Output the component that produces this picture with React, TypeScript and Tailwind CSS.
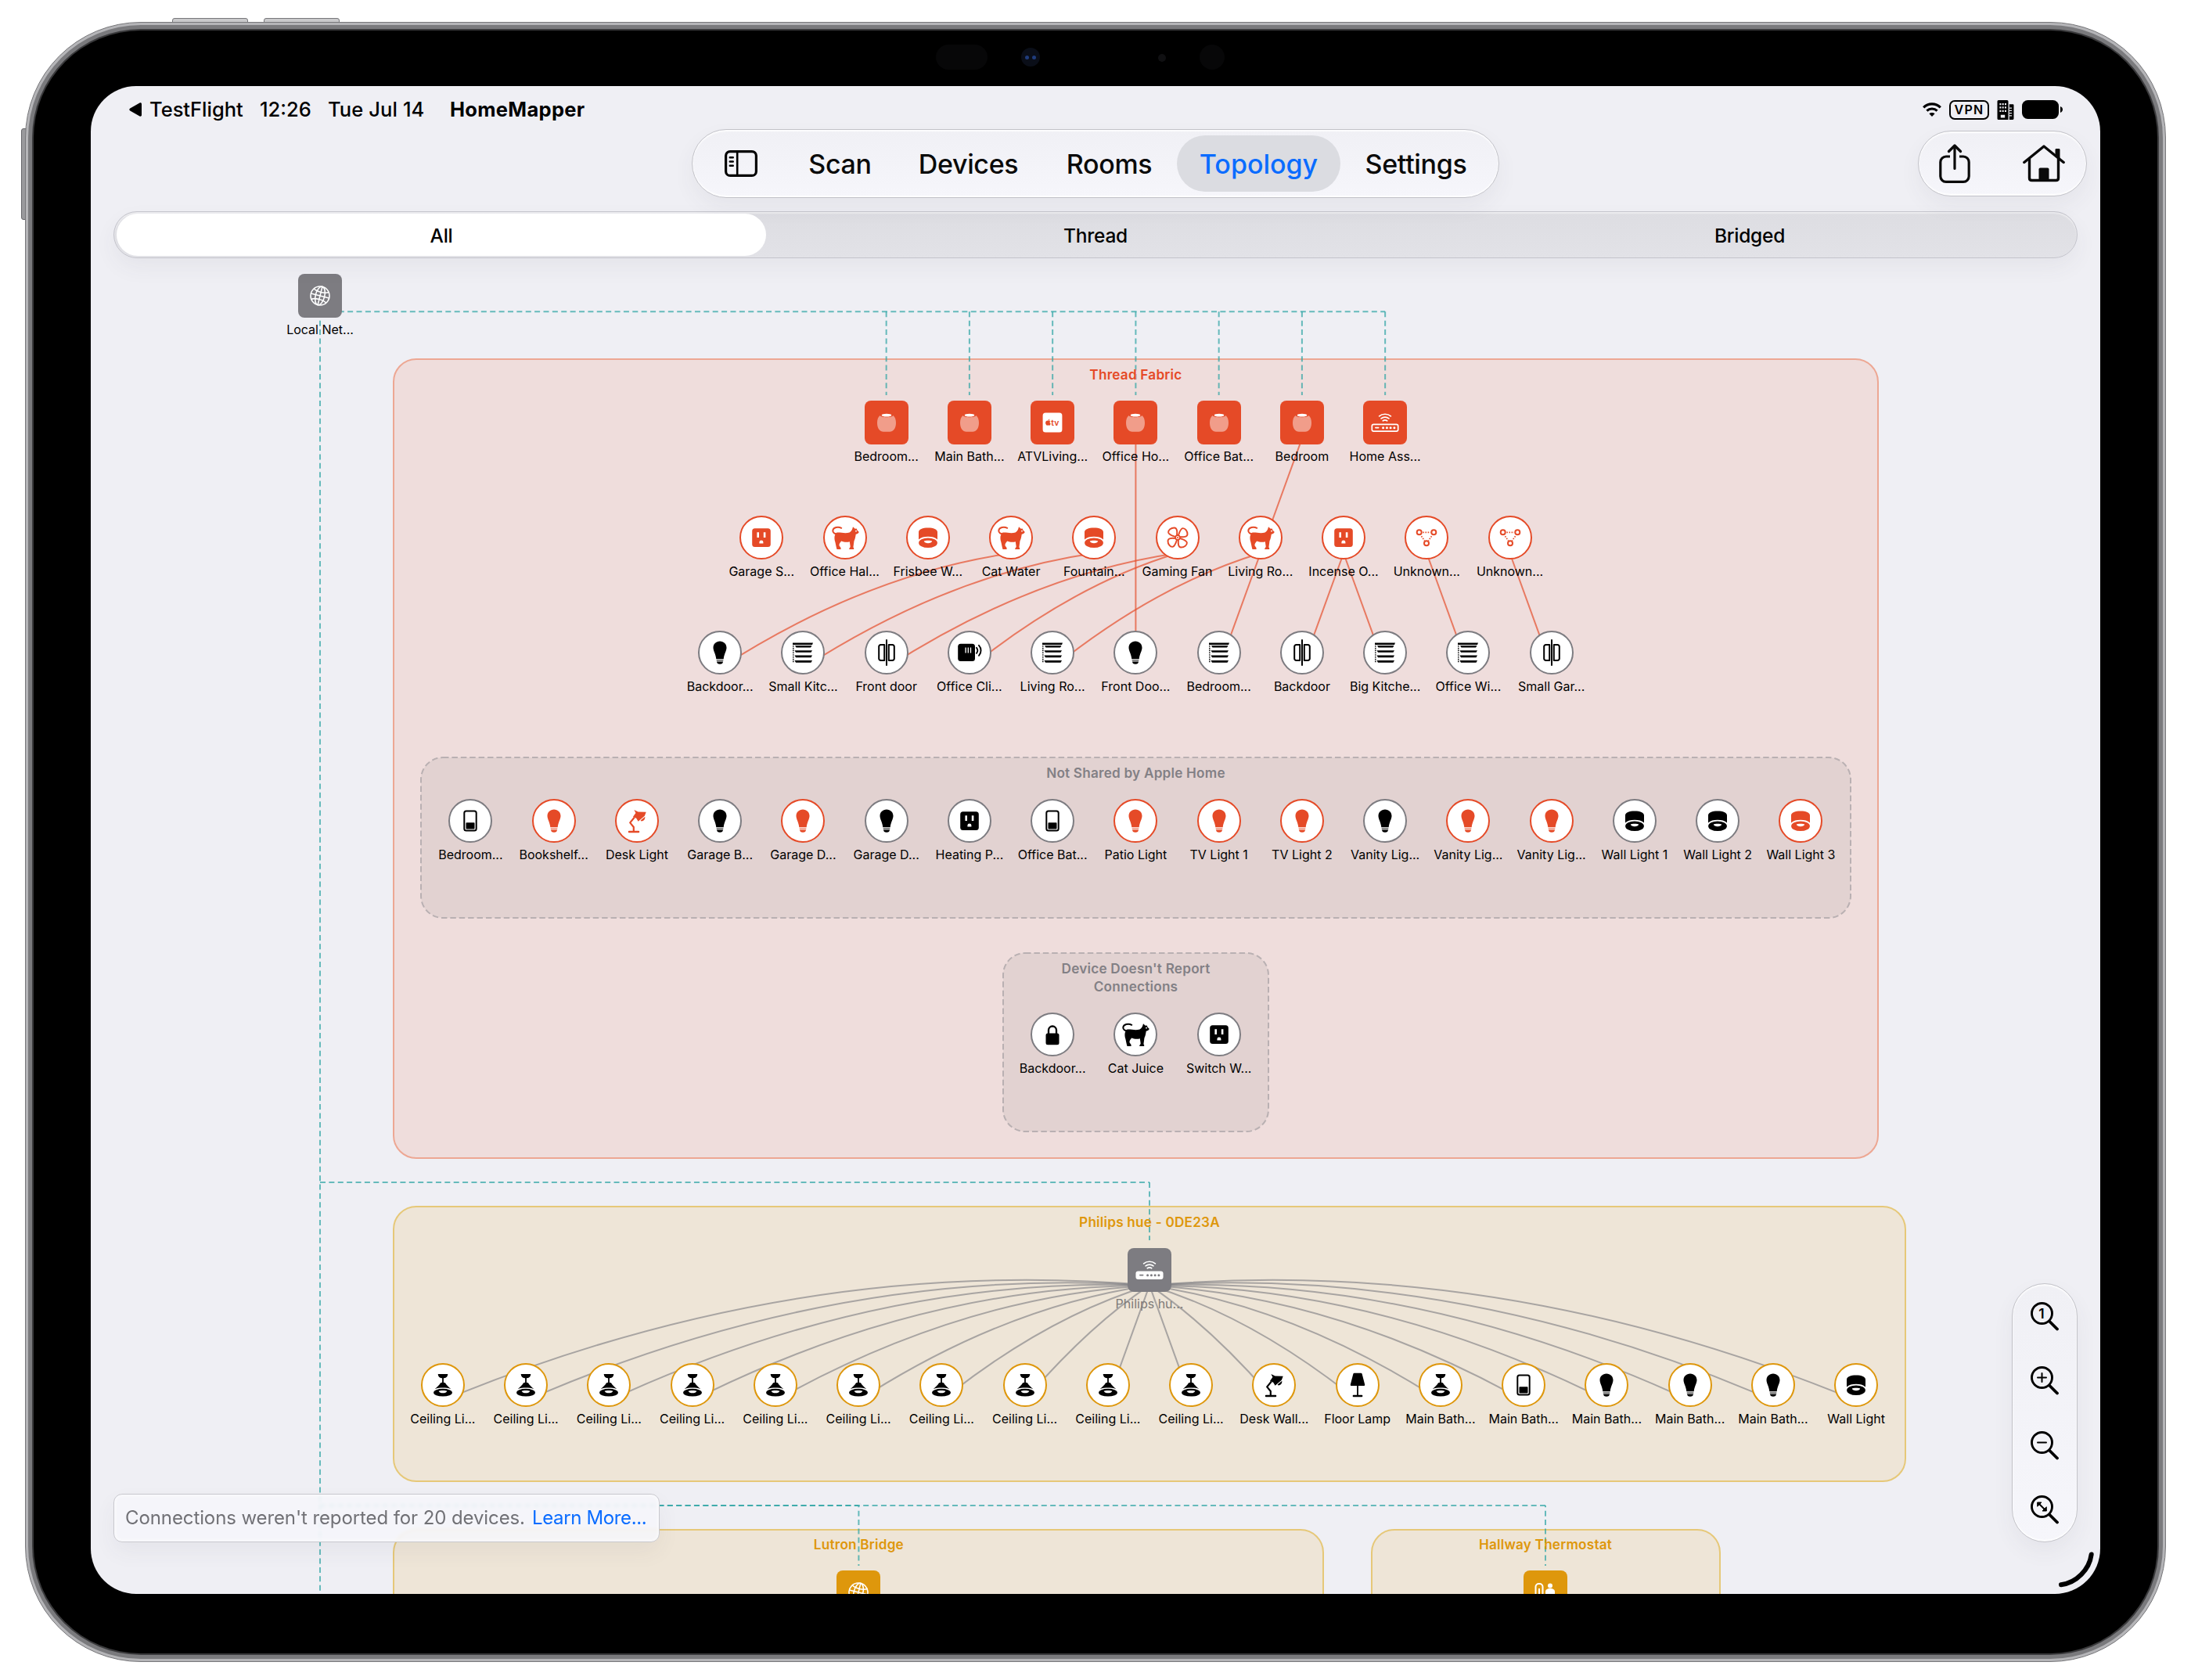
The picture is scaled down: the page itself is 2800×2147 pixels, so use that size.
import React from 'react';
import clsx from 'clsx';

type Tone = 'red' | 'gray' | 'amber' | 'redSolid' | 'graySolid' | 'amberSolid';

interface TopologyNode {
  x: number;
  y: number;
  icon: string;
  label: string;
  tone: Tone;
  muted?: boolean;
}

const PITCH = 106.25;
const CENTER = 1335.4;
const HUE_CENTER = 1353;

const row = (
  center: number,
  y: number,
  items: [icon: string, label: string, tone: Tone][]
): TopologyNode[] =>
  items.map(([icon, label, tone], i) => ({
    x: center + (i - (items.length - 1) / 2) * PITCH,
    y,
    icon,
    label,
    tone,
  }));

const BORDER_ROUTERS = row(CENTER, 430.3, [
  ['homepod', 'Bedroom...', 'redSolid'],
  ['homepod', 'Main Bath...', 'redSolid'],
  ['appletv', 'ATVLiving...', 'redSolid'],
  ['homepod', 'Office Ho...', 'redSolid'],
  ['homepod', 'Office Bat...', 'redSolid'],
  ['homepod', 'Bedroom', 'redSolid'],
  ['router', 'Home Ass...', 'redSolid'],
]);

const ROUTERS = row(CENTER, 577, [
  ['outlet', 'Garage S...', 'red'],
  ['cat', 'Office Hal...', 'red'],
  ['dome', 'Frisbee W...', 'red'],
  ['cat', 'Cat Water', 'red'],
  ['dome', 'Fountain...', 'red'],
  ['fan', 'Gaming Fan', 'red'],
  ['cat', 'Living Ro...', 'red'],
  ['outlet', 'Incense O...', 'red'],
  ['mesh', 'Unknown...', 'red'],
  ['mesh', 'Unknown...', 'red'],
]);

const END_DEVICES = row(CENTER, 723.7, [
  ['bulb', 'Backdoor...', 'gray'],
  ['blinds', 'Small Kitc...', 'gray'],
  ['contact', 'Front door', 'gray'],
  ['climate', 'Office Cli...', 'gray'],
  ['blinds', 'Living Ro...', 'gray'],
  ['bulb', 'Front Doo...', 'gray'],
  ['blinds', 'Bedroom...', 'gray'],
  ['contact', 'Backdoor', 'gray'],
  ['blinds', 'Big Kitche...', 'gray'],
  ['blinds', 'Office Wi...', 'gray'],
  ['contact', 'Small Gar...', 'gray'],
]);

const NOT_SHARED = row(CENTER, 938.7, [
  ['switch', 'Bedroom...', 'gray'],
  ['bulb', 'Bookshelf...', 'red'],
  ['desk', 'Desk Light', 'red'],
  ['bulb', 'Garage B...', 'gray'],
  ['bulb', 'Garage D...', 'red'],
  ['bulb', 'Garage D...', 'gray'],
  ['outlet', 'Heating P...', 'gray'],
  ['switch', 'Office Bat...', 'gray'],
  ['bulb', 'Patio Light', 'red'],
  ['bulb', 'TV Light 1', 'red'],
  ['bulb', 'TV Light 2', 'red'],
  ['bulb', 'Vanity Lig...', 'gray'],
  ['bulb', 'Vanity Lig...', 'red'],
  ['bulb', 'Vanity Lig...', 'red'],
  ['dome', 'Wall Light 1', 'gray'],
  ['dome', 'Wall Light 2', 'gray'],
  ['dome', 'Wall Light 3', 'red'],
]);

const NO_REPORT = row(CENTER, 1211.7, [
  ['lock', 'Backdoor...', 'gray'],
  ['cat', 'Cat Juice', 'gray'],
  ['outlet', 'Switch W...', 'gray'],
]);

const HUE_DEVICES = row(HUE_CENTER, 1659.7, [
  ['pendant', 'Ceiling Li...', 'amber'],
  ['pendant', 'Ceiling Li...', 'amber'],
  ['pendant', 'Ceiling Li...', 'amber'],
  ['pendant', 'Ceiling Li...', 'amber'],
  ['pendant', 'Ceiling Li...', 'amber'],
  ['pendant', 'Ceiling Li...', 'amber'],
  ['pendant', 'Ceiling Li...', 'amber'],
  ['pendant', 'Ceiling Li...', 'amber'],
  ['pendant', 'Ceiling Li...', 'amber'],
  ['pendant', 'Ceiling Li...', 'amber'],
  ['desk', 'Desk Wall...', 'amber'],
  ['floor', 'Floor Lamp', 'amber'],
  ['pendant', 'Main Bath...', 'amber'],
  ['switch', 'Main Bath...', 'amber'],
  ['bulb', 'Main Bath...', 'amber'],
  ['bulb', 'Main Bath...', 'amber'],
  ['bulb', 'Main Bath...', 'amber'],
  ['dome', 'Wall Light', 'amber'],
]);

const LOCAL: TopologyNode = { x: 293, y: 268, icon: 'globe', label: 'Local Net...', tone: 'graySolid' };
const HUE_BRIDGE: TopologyNode = { x: HUE_CENTER, y: 1512.7, icon: 'routerFill', label: 'Philips hu...', tone: 'graySolid', muted: true };
const LUTRON: TopologyNode = { x: 981.4, y: 1925, icon: 'globe', label: '', tone: 'amberSolid' };
const THERMOSTAT: TopologyNode = { x: 1859, y: 1925, icon: 'thermostat', label: '', tone: 'amberSolid' };

const NODES = [
  LOCAL,
  ...BORDER_ROUTERS,
  ...ROUTERS,
  ...END_DEVICES,
  ...NOT_SHARED,
  ...NO_REPORT,
  HUE_BRIDGE,
  ...HUE_DEVICES,
  LUTRON,
  THERMOSTAT,
];

const THREAD_LINKS: [TopologyNode, TopologyNode][] = [
  [ROUTERS[3], END_DEVICES[0]],
  [ROUTERS[4], END_DEVICES[1]],
  [ROUTERS[5], END_DEVICES[2]],
  [ROUTERS[5], END_DEVICES[3]],
  [ROUTERS[6], END_DEVICES[4]],
  [BORDER_ROUTERS[3], END_DEVICES[5]],
  [BORDER_ROUTERS[5], ROUTERS[6]],
  [ROUTERS[6], END_DEVICES[6]],
  [ROUTERS[7], END_DEVICES[7]],
  [ROUTERS[7], END_DEVICES[8]],
  [ROUTERS[8], END_DEVICES[9]],
  [ROUTERS[9], END_DEVICES[10]],
];

// Links join the middle of each icon + label stack, wider spans bow upwards
const linkPath = (a: TopologyNode, b: TopologyNode) => {
  const ay = a.y + 20;
  const by = b.y + 20;
  const dx = Math.abs(a.x - b.x);
  if (dx < 60) return `M${a.x},${ay} L${b.x},${by}`;
  return `M${a.x},${ay} Q${(a.x + b.x) / 2},${(ay + by) / 2 - dx * 0.125} ${b.x},${by}`;
};

const Glyph: React.FC<{ name: string }> = ({ name }) => {
  switch (name) {
    case 'bulb':
      return (
        <g fill="currentColor">
          <path d="M0-14.5c5 0 8.5 3.6 8.5 8.3C8.5-2 5.4 1.500 4.700 8.200h-9.400C-5.400 1.500-8.500-2-8.500-6.200c0-4.700 3.500-8.300 8.500-8.300z" />
          <path d="M-4.300 9.200h8.600v1.700h-8.600z" opacity=".55" />
          <path d="M-4 11.400h8c0 2-1.500 3.300-4 3.300s-4-1.300-4-3.300z" />
        </g>
      );
    case 'outlet':
      return (
        <g>
          <rect x="-11.800" y="-11.700" width="23.600" height="23.600" rx="3.500" fill="currentColor" />
          <path d="M-5.600-6.800h2.600V0h-2.600zM2.800-6.800h2.600V0H2.800zM-2.600 7.600V5.800a2.500 2.300 0 0 1 5 0v1.800z" fill="#fff" />
        </g>
      );
    case 'cat':
      return (
        <g>
          <path
            d="M-11-6.200C-7-7.200 0-4.600 5.600-6.600 8-8 9.200-10 10-13.800l2.800 2.600 1.800-.2 1.200 2.400 1.900 1.800c-.2 2-2.400 2.600-4 3C13.300-.5 12.700 2 11.500 4.200L10.400 12.500c1 .6 1 1.700.7 2.500H5.200c-.2-1.600 1.300-2 1.500-3.500L5.800 5.300C2 6.400-2 5.700-4.800 4.400-7 7-7.900 8.300-7.400 10.500l1.700 2.300c.4.700.4 1.500.2 2.200h-5c-.8-2.300-1.300-6-2.200-9.500C-14 1.500-14-3.500-11-6.200z"
            fill="currentColor"
          />
          <path d="M-4.800-12.200c-4-2.200-10.500-1-10.900 3.200-.2 3 2.700 4.600 6 4" fill="none" stroke="currentColor" strokeWidth="2" strokeLinecap="round" />
          <circle cx="14" cy="-8.300" r=".9" fill="#fff" />
        </g>
      );
    case 'dome':
      return (
        <g>
          <path d="M-12 2.500V-7c0-3.500 5-5.500 12-5.500S12-10.500 12-7v9.500C9-.3 5-1.200 0-1.200S-9-.3-12 2.500z" fill="currentColor" />
          <ellipse cx="0" cy="6.800" rx="11.900" ry="6.300" fill="currentColor" />
          <path d="M-5.200 4.600c1.400-1 9-1 10.400 0C4.500 8.200-4.500 8.200-5.200 4.600z" fill="#fff" />
        </g>
      );
    case 'pendant':
      return (
        <g fill="currentColor">
          <path d="M-6.300-14H6.300c0 3-2 5-4.800 5.300h-3C-4.300-9-6.300-11-6.300-14z" />
          <path d="M-.9-9.500H.9v6.200l2 .6C4.600.5 8 3 10.300 5.200 7 3.700 3.500 3.600 0 3.600s-7 .1-10.300 1.600C-8 3-4.600.5-2.900-2.700l2-.6z" />
          <ellipse cx="0" cy="9.700" rx="11.900" ry="4.900" />
          <path d="M-5.300 7.800c1.500-1 9.100-1 10.600 0C4.500 11.200-4.500 11.200-5.300 7.800z" fill="#fff" />
        </g>
      );
    case 'fan':
      return (
        <g fill="none" stroke="currentColor" strokeWidth="1.900" strokeLinejoin="round">
          {[0, 90, 180, 270].map((a) => (
            <path key={a} transform={`rotate(${a})`} d="M-1-3.200C-.3-7.500-.8-12.400-4.200-12.500-8.500-12.600-12-9.600-11.900-6.600-11.600-3.600-7-2.400-3.200-1" />
          ))}
          <circle r="3" />
          <circle r="1" fill="currentColor" stroke="none" />
        </g>
      );
    case 'mesh':
      return (
        <g fill="none" stroke="currentColor" strokeWidth="2">
          <circle cx="-9.300" cy="-6.700" r="3" />
          <circle cx="9.300" cy="-6.700" r="3" />
          <circle cx="0" cy="7.200" r="3" />
          <path d="M-4.600-6.700h9.600M-6.500-1.800l4 5.600M6.500-1.800l-4 5.600" strokeDasharray="1.500 1.600" strokeWidth="1.700" />
        </g>
      );
    case 'blinds':
      return (
        <g fill="currentColor">
          <path d="M-13-12.500h26l-1 2.600h-25zM-10-9h21.500l-1.500 2.500H-8.500zM-10.500-2.800H12L10.500-.2H-9zM-10.500 3.600H12l-1.500 2.600H-9zM-10.500 10H12l-1.500 2.700H-9z" />
          <path d="M-12.200-9v21.700" fill="none" stroke="currentColor" strokeWidth="1.400" strokeDasharray="1.600 1.200" />
        </g>
      );
    case 'contact':
      return (
        <g fill="none" stroke="currentColor" strokeWidth="2.200">
          <path d="M0-16V16" strokeWidth="2" strokeLinecap="round" />
          <path d="M-2.800-10h-4.700a2.300 2.300 0 0 0-2.300 2.300V7.700A2.300 2.300 0 0 0-7.500 10h4.700zM2.800-10h4.700a2.300 2.300 0 0 1 2.300 2.300V7.700A2.300 2.300 0 0 1 7.500 10H2.800z" strokeWidth="2" strokeLinejoin="round" />
        </g>
      );
    case 'climate':
      return (
        <g>
          <rect x="-14.800" y="-11.300" width="21.800" height="22.300" rx="3.500" fill="currentColor" />
          <path d="M-4.900-6.500v7M-1.700-6.500v7M1.500-6.500v7" stroke="#fff" strokeWidth="1.300" />
          <path d="M9-6.200c1.600 2 1.600 5 0 7M12-9.200c3.400 3.600 3.400 9.400 0 13" fill="none" stroke="currentColor" strokeWidth="1.900" strokeLinecap="round" />
        </g>
      );
    case 'switch':
      return (
        <g>
          <rect x="-7.700" y="-12.600" width="15.400" height="25.200" rx="2.500" fill="none" stroke="currentColor" strokeWidth="2" />
          <rect x="-5.500" y="2.300" width="11" height="8.200" rx=".8" fill="currentColor" />
        </g>
      );
    case 'desk':
      return (
        <g fill="currentColor">
          <path d="M-3.600-14 1.500-11.400 11.700-11.200 9.800-6.200 1.600.8-.8-3.200-5-5.200-1.600-10z" />
          <path d="M10.300-5.200C10.600-2.200 9 .2 5.600.6L4.600-.6z" />
          <path d="M-3.200-4.500-8.800 2.400-4.200 8v5.500" fill="none" stroke="currentColor" strokeWidth="2.200" strokeLinejoin="round" />
          <rect x="-11.200" y="12.700" width="14.400" height="2.500" rx="1" />
        </g>
      );
    case 'floor':
      return (
        <g fill="currentColor">
          <path d="M-4.200-15.300h8.400c.8 0 1.300.4 1.500 1.200L9.200-.6c.2.900-.3 1.500-1.200 1.500H-8c-.9 0-1.400-.6-1.200-1.500l3.500-13.500c.2-.8.7-1.200 1.500-1.200z" />
          <path d="M-.9.900H.9V13H-.9z" />
          <rect x="-6.300" y="12.700" width="12.600" height="2.500" rx="1" />
        </g>
      );
    case 'lock':
      return (
        <g>
          <rect x="-8.500" y="-1.500" width="17" height="14.800" rx="2.500" fill="currentColor" />
          <path d="M-5-1V-5.500a5 5 0 0 1 10 0V-1" fill="none" stroke="currentColor" strokeWidth="2.300" />
        </g>
      );
    case 'homepod':
      return (
        <g>
          <path d="M-8.500-9C-6.500-6 6.500-6 8.500-9 10.800-7 12-4 12 .5c0 7-3.500 11.300-8 11.300h-8C-8.500 11.800-12 7.500-12 .5c0-4.500 1.200-7.500 3.500-9.500z" fill="#fff" opacity=".46" />
          <ellipse cx="0" cy="-9.300" rx="6.300" ry="1.900" fill="#fff" />
        </g>
      );
    case 'appletv':
      return (
        <g>
          <rect x="-12.400" y="-12.400" width="24.800" height="24.800" rx="3.500" fill="#fff" />
          <path d="M-5.300-2.200c.9-.6 2-.5 2.700.3-1.200.9-1 2.700.3 3.300-.5 1.600-1.500 2.700-2.600 2.200-.4-.2-.8-.2-1.200 0C-7.500 4.200-9 2-8.900.2c.1-2 1.900-3.200 3.600-2.400zM-5.400-2.600c0-1 .8-1.900 1.700-2 .1 1-.7 2-1.700 2z" fill="#e54a27" />
          <text x="-1.800" y="4" fontSize="10.500" fontWeight="600" fontFamily="Inter, sans-serif" fill="#e54a27">tv</text>
        </g>
      );
    case 'router':
    case 'routerFill': {
      const filled = name === 'routerFill';
      return (
        <g>
          <rect x="-16.700" y="2.300" width="33.400" height="8.800" rx="2.200" fill={filled ? '#fff' : 'none'} stroke="#fff" strokeWidth="1.700" />
          <g fill={filled ? '#7d7c81' : '#fff'}>
            <rect x="-13" y="5.700" width="5.500" height="1.700" rx=".8" />
            <circle cx="-2.400" cy="6.700" r="1.500" />
            <circle cx="2.400" cy="6.700" r="1.500" />
            <circle cx="7.100" cy="6.700" r="1.500" />
            <circle cx="11.900" cy="6.700" r="1.500" />
          </g>
          <path d="M-7.400-8.200c4-3.400 10.800-3.400 14.800 0M-5-5.200c2.800-2.300 7.200-2.300 10 0M-2.700-2.200c1.600-1.200 3.800-1.200 5.400 0" fill="none" stroke="#fff" strokeWidth="1.700" strokeLinecap="round" />
        </g>
      );
    }
    case 'globe':
      return (
        <g fill="none" stroke="#fff" strokeWidth="1.600">
          <circle r="12" />
          <g transform="rotate(14)">
            <ellipse rx="5.800" ry="12" />
            <path d="M0-12V12M-12 0H12M-9.800-7c4.500 3.200 15 3.200 19.600 0M-9.800 7c4.500-3.200 15-3.200 19.600 0" />
          </g>
        </g>
      );
    case 'thermostat':
      return (
        <g>
          <rect x="-12.500" y="-11" width="9" height="24" rx="4" fill="none" stroke="#fff" strokeWidth="2" />
          <path d="M-8-5V8" stroke="#fff" strokeWidth="2" />
          <circle cx="6" cy="-8.500" r="3" fill="#fff" />
          <path d="M0 8V-1c0-2 2-4 6-4s6 2 6 4v9z" fill="#fff" />
        </g>
      );
    default:
      return null;
  }
};

const TONES: Record<Tone, string> = {
  red: 'rounded-full border-2 border-[#e54a27] bg-white text-[#e54a27]',
  gray: 'rounded-full border-2 border-[#7d7c81] bg-white text-black',
  amber: 'rounded-full border-2 border-[#de970c] bg-white text-black',
  redSolid: 'rounded-[8px] bg-[#e54a27] text-white',
  graySolid: 'rounded-[8px] bg-[#7d7c81] text-white',
  amberSolid: 'rounded-[8px] bg-[#de970c] text-white',
};

const NodeView: React.FC<{ node: TopologyNode }> = ({ node }) => (
  <div
    className="absolute -mt-7 flex w-[110px] -translate-x-1/2 flex-col items-center gap-[5px]"
    style={{ left: node.x, top: node.y }}
  >
    <div className={clsx('flex size-14 shrink-0 items-center justify-center', TONES[node.tone])}>
      <svg viewBox="-20 -20 40 40" className="size-10 shrink-0">
        <Glyph name={node.icon} />
      </svg>
    </div>
    <span className={clsx('text-[16px] leading-5 whitespace-nowrap', node.muted ? 'text-[#7f7b79]' : 'text-black')}>
      {node.label}
    </span>
  </div>
);

const Links: React.FC = () => (
  <svg viewBox="0 0 2568 1927" className="absolute inset-0 h-[1927px] w-[2568px]" fill="none">
    {/* Local network */}
    <g stroke="#2fa5a5" strokeOpacity=".72" strokeWidth="2" strokeDasharray="7 4.38">
      <path d="M293,288.300V1927" />
      <path d={`M294,288.300H${BORDER_ROUTERS[6].x}`} />
      {BORDER_ROUTERS.map((n) => (
        <path key={n.x} d={`M${n.x},288.300V395`} />
      ))}
      <path d={`M293,1401H${HUE_CENTER}`} />
      <path d={`M${HUE_CENTER},1401V1475`} />
      <path d="M293,1814H1859" />
      <path d="M293,1814H981.400" />
      <path d="M981.400,1814V1891M1859,1814V1891" strokeDashoffset="4.700" />
    </g>
    <g stroke="#e54a27" strokeOpacity=".68" strokeWidth="2">
      {THREAD_LINKS.map(([a, b], i) => (
        <path key={i} d={linkPath(a, b)} />
      ))}
    </g>
    <g stroke="#7d7c81" strokeOpacity=".62" strokeWidth="2">
      {HUE_DEVICES.map((n) => (
        <path key={n.x} d={linkPath(HUE_BRIDGE, n)} />
      ))}
    </g>
  </svg>
);

const GroupTitle: React.FC<{ x: number; y: number; className: string; children: React.ReactNode }> = ({
  x,
  y,
  className,
  children,
}) => (
  <span
    className={clsx('absolute -translate-1/2 text-[17.200px] leading-5 font-semibold tracking-[0.200px] whitespace-nowrap', className)}
    style={{ left: x, top: y }}
  >
    {children}
  </span>
);

const DashedGroup: React.FC<{ title: string; className: string }> = ({ title, className }) => (
  <div className={clsx('absolute flex justify-center rounded-[28px] bg-[#e2d2d1] px-[60px] pt-[8px]', className)}>
    <svg className="absolute inset-0 size-full overflow-visible">
      <rect width="100%" height="100%" rx="28" fill="none" stroke="#b9b0b2" strokeWidth="2" strokeDasharray="7.500 3.900" />
    </svg>
    <span className="text-center text-[17.200px] leading-[23.400px] font-semibold tracking-[0.200px] text-[#828085]">{title}</span>
  </div>
);

const Canvas: React.FC = () => (
  <div className="absolute inset-0 overflow-hidden">
    <div className="absolute top-[348px] left-[386px] h-[1023px] w-[1899px] rounded-[30px] border-2 border-[#eda793] bg-[#efdddc]" />
    <div className="absolute top-[1431px] left-[386px] h-[353px] w-[1934px] rounded-[30px] border-2 border-[#e6c878] bg-[#eee5d7]" />
    <div className="absolute top-[1844px] left-[386px] h-[353px] w-[1190px] rounded-[30px] border-2 border-[#e6c878] bg-[#eee5d7]" />
    <div className="absolute top-[1844px] left-[1636px] h-[353px] w-[447px] rounded-[30px] border-2 border-[#e6c878] bg-[#eee5d7]" />
    <DashedGroup title="Not Shared by Apple Home" className="top-[858px] left-[422px] h-[205px] w-[1827px]" />
    <DashedGroup title="Device Doesn't Report Connections" className="top-[1108px] left-[1166px] h-[228px] w-[339px]" />
    <Links />
    <GroupTitle x={CENTER} y={368.500} className="text-[#e54a27]">Thread Fabric</GroupTitle>
    <GroupTitle x={HUE_CENTER} y={1451.500} className="text-[#de970c]">Philips hue - 0DE23A</GroupTitle>
    <GroupTitle x={981.400} y={1863.500} className="text-[#de970c]">Lutron Bridge</GroupTitle>
    <GroupTitle x={1859} y={1863.500} className="text-[#de970c]">Hallway Thermostat</GroupTitle>
    {NODES.map((n, i) => (
      <NodeView key={i} node={n} />
    ))}
  </div>
);

const StatusBar: React.FC = () => (
  <div className="flex h-[55px] items-center pt-[5px] pr-[48px] pl-[49px] text-[25.500px] leading-none font-medium text-black">
    <svg viewBox="0 0 16 18" className="h-[18px] w-4">
      <path d="M1.200 7.600 13.500.6c1.200-.6 2.500 0 2.500 1.300v14.200c0 1.300-1.300 1.900-2.500 1.300L1.200 10.400c-1.200-.7-1.200-2.100 0-2.800z" />
    </svg>
    <span className="ml-[10px] w-[141px]">TestFlight</span>
    <span className="w-[87px]">12:26</span>
    <span className="w-[156px] tracking-[0.100px]">Tue Jul 14</span>
    <span className="font-bold tracking-[0.300px]">HomeMapper</span>
    <div className="ml-auto flex items-center gap-[10px]">
      <svg viewBox="0 0 24 18" className="h-[18px] w-6" fill="none" stroke="#000" strokeWidth="3.200">
        <path d="M1.200 6.300c6-5.800 15.600-5.800 21.600 0M5.400 10.600c3.700-3.500 9.500-3.500 13.200 0" />
        <path d="M12 18l-3.600-3.700c2-1.700 5.200-1.700 7.200 0z" fill="#000" stroke="none" />
      </svg>
      <span className="flex h-[25px] w-[51px] items-center justify-center rounded-[7px] border-2 border-black text-[16px] font-semibold tracking-[0.080em]">
        VPN
      </span>
      <svg viewBox="0 0 22 25" className="h-[25px] w-[22px]">
        <path d="M2 0h11a1.500 1.500 0 0 1 1.500 1.500V25H2a1.500 1.500 0 0 1-1.500-1.500v-22A1.500 1.500 0 0 1 2 0zM15.800 5.300h4.400c.8 0 1.300.5 1.300 1.300v17c0 .8-.5 1.300-1.300 1.300h-4.400z" />
        <path d="M3.400 4h2v2.200h-2zM6.700 4h2v2.200h-2zM10 4h2v2.200h-2zM3.400 8.300h2v2.200h-2zM6.700 8.300h2v2.200h-2zM10 8.300h2v2.200h-2zM3.400 12.700h2v2.200h-2zM6.700 12.700h2v2.200h-2zM10 12.700h2v2.200h-2zM4.800 18.800h5.400v3.800H4.800zM16 9.500h3v1.300h-3zM16 12.800h3v1.300h-3zM16 16h3v1.300h-3zM16 19.200h3v1.300h-3z" fill="#efeff4" />
      </svg>
      <svg viewBox="0 0 52 24" className="h-6 w-[52px]">
        <rect width="47" height="24" rx="7.500" />
        <path d="M49 8c2 .8 3 2.200 3 4s-1 3.200-3 4z" />
      </svg>
    </div>
  </div>
);

const glass =
  'border border-[#c2c2c8] bg-linear-to-b from-[#f0f0f5] to-[#f6f6fb] shadow-[0_12px_28px_rgba(60,70,90,0.060),inset_0_2px_2px_rgba(255,255,255,0.900),inset_0_-2px_2px_rgba(255,255,255,0.900)]';

const TABS: [name: string, width: string][] = [
  ['Scan', 'w-[141px]'],
  ['Devices', 'w-[187px]'],
  ['Rooms', 'w-[173px]'],
  ['Topology', 'w-[209px]'],
  ['Settings', 'w-[193px]'],
];

const Toolbar: React.FC = () => (
  <div className="grid h-[88px] grid-cols-[1fr_1032px_1fr] items-center">
    <div />
    <div className={clsx('flex h-[88px] items-center rounded-full pl-[6px]', glass)}>
      <button className="flex w-[112px] items-center justify-center">
        <svg viewBox="0 0 42 34" className="h-[34px] w-[42px]" fill="none" stroke="#000">
          <rect x="1.600" y="1.600" width="38.800" height="30.800" rx="5.500" strokeWidth="3.200" />
          <path d="M16.200 2v30" strokeWidth="2.600" />
          <path d="M6.800 9.300h4M6.800 14.500h4M6.800 19.700h4" strokeWidth="2.400" strokeLinecap="round" />
        </svg>
      </button>
      {TABS.map(([name, width]) => (
        <button
          key={name}
          className={clsx(
            'flex h-[72px] items-center justify-center rounded-full text-[34px] font-medium',
            width,
            name === 'Topology' ? 'bg-[#dbdce1] tracking-[0] text-[#0a6cff]' : 'tracking-[-0.010em] text-[#0a0a0a]'
          )}
        >
          {name}
        </button>
      ))}
    </div>
    <div className={clsx('mr-[17px] flex h-[84px] w-[216px] items-center justify-between justify-self-end rounded-full pr-[27px] pl-[26px]', glass)}>
      <svg viewBox="0 0 40 50" className="h-[50px] w-10" fill="none" stroke="#0a0a0a" strokeWidth="3.200" strokeLinecap="round" strokeLinejoin="round">
        <path d="M14 16H9a7.200 7.200 0 0 0-7.200 7.200v18A7.200 7.200 0 0 0 9 48.400h22a7.200 7.200 0 0 0 7.200-7.200v-18A7.200 7.200 0 0 0 31 16h-5" strokeLinecap="butt" />
        <path d="M20 31.500V2.500M12.500 9.500 20 2l7.500 7.500" />
      </svg>
      <svg viewBox="0 0 54 48" className="h-12 w-[54px]" fill="none" stroke="#0a0a0a" strokeLinecap="round" strokeLinejoin="round">
        <path d="M1.800 22.500 27 2l25.200 20.500" strokeWidth="3.400" />
        <path d="M8.500 18v24.500c0 2 1 3 3 3h31c2 0 3-1 3-3V18" strokeWidth="3.400" />
        <path d="M41.500 6.500c0-1 .5-1.500 1.500-1.500h3c1 0 1.500.5 1.500 1.500V18l-6-5z" fill="#0a0a0a" stroke="none" />
        <path d="M20.500 45V31.500c0-1.300.7-2 2-2h9c1.300 0 2 .7 2 2V45z" fill="#0a0a0a" stroke="none" />
      </svg>
    </div>
  </div>
);

const SegmentedControl: React.FC = () => (
  <div className="mx-[29px] mt-[17px] grid h-[60px] grid-cols-[830px_1fr_830px] items-center rounded-full border border-[#c4c4cc] bg-linear-to-b from-[#dddde2] to-[#e2e2e7] px-[3px] text-[24.500px] font-medium tracking-[-0.010em] text-black shadow-[0_12px_28px_rgba(60,70,90,0.060),inset_0_2px_2px_rgba(255,255,255,0.500)]">
    <button className="flex h-[54px] items-center justify-center rounded-full bg-white pt-[2px]">All</button>
    <button className="pt-[2px]">Thread</button>
    <button className="pt-[2px]">Bridged</button>
  </div>
);

const Magnifier: React.FC<{ children: React.ReactNode }> = ({ children }) => (
  <svg viewBox="0 0 36 37" className="h-[37px] w-9" fill="none" stroke="#000" strokeWidth="2" strokeLinecap="round" strokeLinejoin="round">
    <circle cx="14.500" cy="14.500" r="13" strokeWidth="2.900" />
    <path d="m24.500 25 9.500 9.500" strokeWidth="3.800" />
    {children}
  </svg>
);

const ZoomControls: React.FC = () => (
  <div className={clsx('absolute top-[1530px] right-[29px] flex h-[331px] w-[84px] flex-col items-center gap-[45.300px] rounded-full pt-[23px]', glass)}>
    <Magnifier>
      <text x="14" y="20.800" textAnchor="middle" fontSize="17.500" fontWeight="600" fontFamily="Inter, sans-serif" fill="#000" stroke="none">
        1
      </text>
    </Magnifier>
    <Magnifier>
      <path d="M14.500 9v11M9 14.500h11" />
    </Magnifier>
    <Magnifier>
      <path d="M9 14.500h11" />
    </Magnifier>
    <Magnifier>
      <path d="m10.500 10.500 8 8" />
      <path d="M9 9h5l-5 5zM20 20h-5l5-5z" fill="#000" strokeWidth="1" />
    </Magnifier>
  </div>
);

const Notice: React.FC = () => (
  <div className="absolute top-[1799px] left-[29px] flex h-[62px] w-[698px] items-center gap-[9px] rounded-[11px] border border-[#c8c8cd] bg-[#f6f6fa]/88 pl-[14px] text-[24px] tracking-[-0.100px] whitespace-nowrap text-[#717176] shadow-[0_12px_28px_rgba(60,70,90,0.060),inset_0_0_4px_rgba(255,255,255,1)] backdrop-blur-[2px]">
    <span>Connections weren't reported for 20 devices.</span>
    <a className="tracking-[-0.350px] text-[#0a6cff]">Learn More...</a>
  </div>
);

const App: React.FC = () => (
  <div className="relative h-[2147px] w-[2800px] overflow-hidden bg-white px-8 pt-7 font-[Inter,sans-serif]">
    {/* Hardware buttons */}
    <div className="absolute top-[23px] left-[220px] h-2 w-[97px] rounded-t-[3px] border border-[#77777a] bg-[#c9c9cb]" />
    <div className="absolute top-[23px] left-[337px] h-2 w-[97px] rounded-t-[3px] border border-[#77777a] bg-[#c9c9cb]" />
    <div className="absolute top-[164px] left-[27px] h-[117px] w-2 rounded-l-[3px] border border-[#66666a] bg-[#9a9a9d]" />

    <div className="relative h-[2096px] w-[2736px] rounded-[148px] border border-[#77777a] bg-[#b5b5b8] p-[3px]">
      <div className="h-full w-full rounded-[144px] bg-[#7a7a7d] p-[5px]">
        <div className="h-full w-full rounded-[139px] bg-[#3a3a3c] p-[2px]">
          <div className="h-full w-full rounded-[137px] bg-black px-[73px] pt-[71px]">
            <div className="relative h-[1927px] w-[2568px] overflow-hidden rounded-[58px] bg-[#efeff4]">
              <Canvas />
              <div className="relative">
                <StatusBar />
                <Toolbar />
                <SegmentedControl />
              </div>
              <Notice />
              <ZoomControls />
              {/* Corner resize handle */}
              <svg viewBox="0 0 60 60" className="absolute right-0 bottom-0 size-[60px]" fill="none" stroke="#000" strokeWidth="6" strokeLinecap="round">
                <path d="M48.700 9.500C46 29 30 45.500 10 48.300" />
              </svg>
            </div>
          </div>
        </div>
      </div>

      {/* Front camera and sensors */}
      <div className="absolute top-[28px] left-[1163px] h-8 w-[66px] rounded-full bg-[#070708]" />
      <div className="absolute top-[32px] left-[1272px] flex size-6 items-center justify-center gap-1 rounded-full bg-[#0a0e18]">
        <span className="size-[5px] rounded-full bg-[#1f3c7c]" />
        <span className="size-[5px] rounded-full bg-[#1f3c7c]" />
      </div>
      <div className="absolute top-[40px] left-[1447px] size-2.5 rounded-full bg-[#101012]" />
      <div className="absolute top-[28px] left-[1500px] size-8 rounded-full bg-[#070708]" />
    </div>
  </div>
);

export default App;
